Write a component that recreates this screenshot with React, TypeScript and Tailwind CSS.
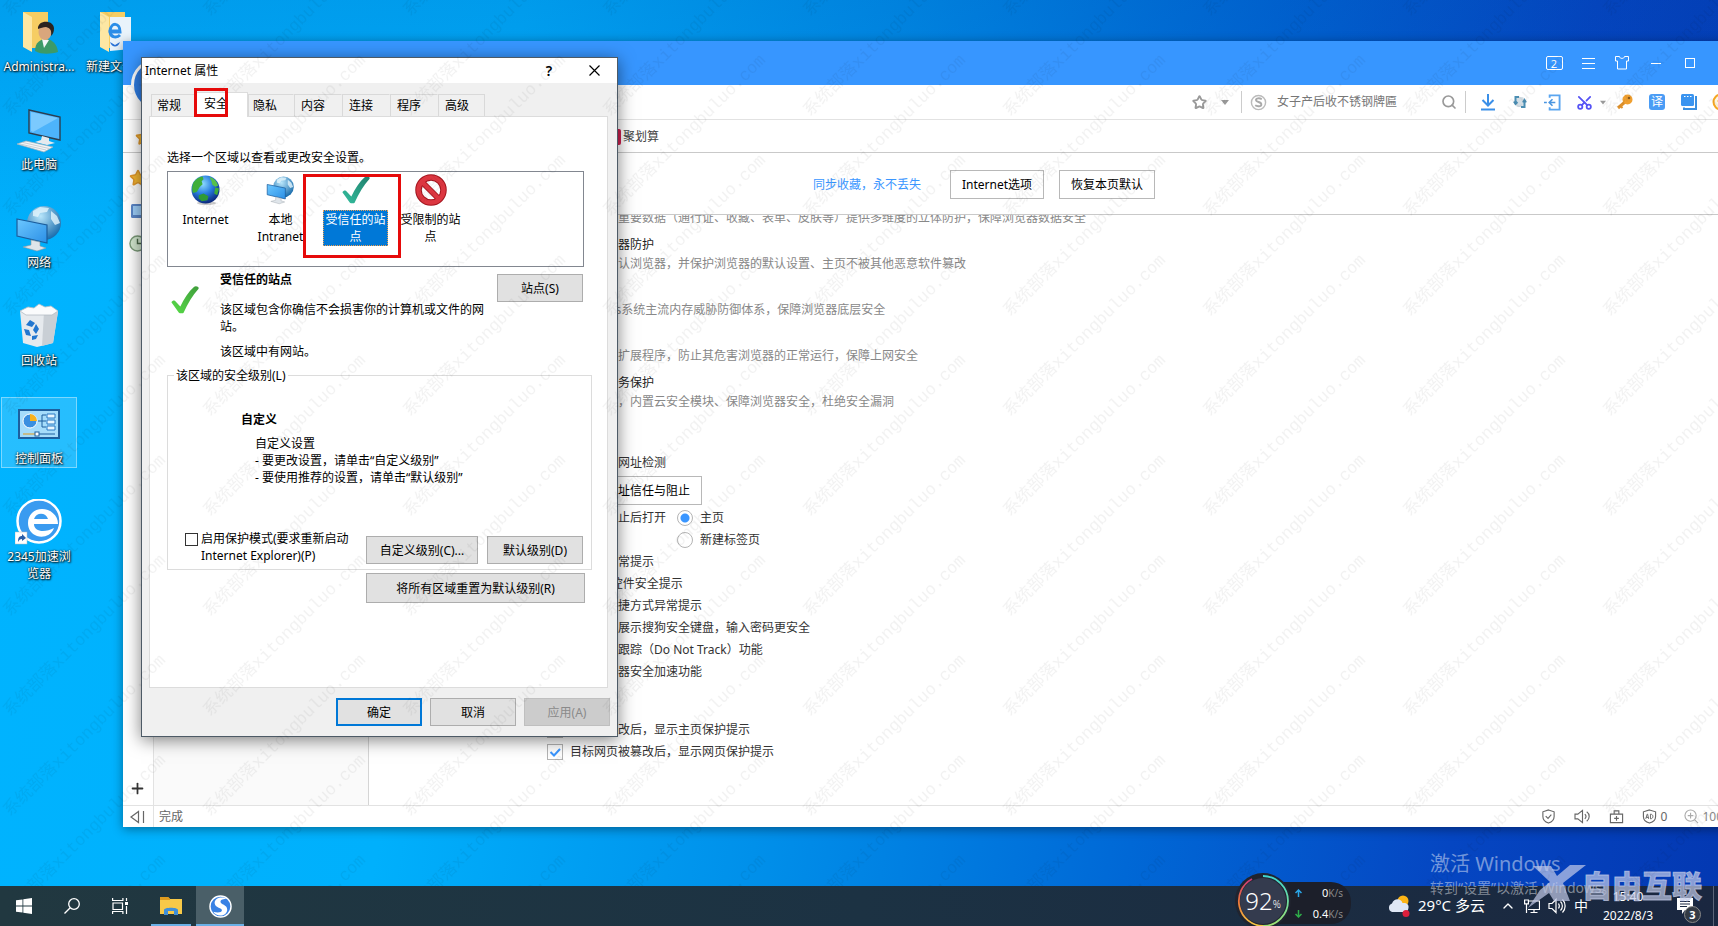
import { useState } from "react";
import type { ReactNode } from "react";
import { ChevronUp, Menu, Plus, Scissors, Search, Shirt, Star, X } from "lucide-react";
import clsx from "clsx";

const Globe = ({ className }: { className?: string }) => (
  <svg viewBox="0 0 32 32" className={className}>
    <defs>
      <radialGradient id="globe" cx="40%" cy="30%" r="70%">
        <stop offset="0" stopColor="#8fdcff" />
        <stop offset="0.5" stopColor="#2a7fe0" />
        <stop offset="1" stopColor="#0b2a80" />
      </radialGradient>
    </defs>
    <ellipse cx="17" cy="29" rx="10" ry="2" fill="#000" opacity="0.2" />
    <circle cx="16" cy="15" r="14.5" fill="url(#globe)" />
    <path d="M3 9c2-4 6-7 10-7.500l1 3-2 2 1 3-3 3-3 5-4 1c-1-3-1-6 0-9.500z" fill="#3fae3a" />
    <path d="M20 2c5 1 8 5 9 9l-3 1-3-2-1-4z" fill="#57c04a" />
    <path d="M9 21l5-2 5 3-1 4-6 1-3-3z" fill="#2f9a35" />
    <path d="M26 13l4 1-2 7-3-2z" fill="#3fae3a" />
  </svg>
);

const NetworkScreen = ({ className }: { className?: string }) => (
  <svg viewBox="0 0 48 48" className={className}>
    <defs>
      <linearGradient id="screen" x1="0" y1="0" x2="1" y2="1">
        <stop offset="0" stopColor="#6cc8ff" />
        <stop offset="1" stopColor="#2b8fe6" />
      </linearGradient>
      <radialGradient id="world" cx="40%" cy="30%" r="70%">
        <stop offset="0" stopColor="#b8e6fb" />
        <stop offset="1" stopColor="#1d6fae" />
      </radialGradient>
    </defs>
    <circle cx="29" cy="18" r="17" fill="url(#world)" />
    <path d="M18 6l7-4 9 1-2 4-7 1-2 4-5-1zM36 6l6 5 3 7-5 2-4-6z" fill="#e4f5fc" opacity="0.8" />
    <path d="M2 14l30 6v18L2 31z" fill="url(#screen)" stroke="#1b5d9c" strokeWidth="1.2" />
    <path d="M16 35l9 2v4l6 2-9 3-14-4 8-2z" fill="#dfe5ea" stroke="#90989f" strokeWidth="0.6" />
  </svg>
);

const Computer = () => (
  <svg viewBox="0 0 48 48" className="size-12">
    <path d="M14 3l31 7v23l-31-7z" fill="#4db4fb" stroke="#2c3e50" strokeWidth="1.4" />
    <path d="M16 5l27 6-25 14-2-1z" fill="#8fd3ff" opacity="0.7" />
    <path d="M27 29l7 2v3l6 2-8 2-12-3 6-2z" fill="#e5eaee" />
    <path d="M2 37l9-3 27 6-9 5z" fill="#f3f5f6" stroke="#a4b0b9" strokeWidth="0.7" />
    <path d="M5 37l26 6M8 35.500l26 6" stroke="#b4bec6" strokeWidth="0.7" />
  </svg>
);

const UserFolder = () => (
  <svg viewBox="0 0 48 48" className="size-12">
    <path d="M8 3h25v36H17z" fill="#f6cd63" />
    <path d="M8 3l9 5v35l-9-5z" fill="#fde7a3" />
    <path d="M20 42c0-9 6-12 11-12s11 4 12 13c-7 2-16 3-23-1z" fill="#3c9a68" />
    <path d="M27 30l2 9 5-8z" fill="#f3f7fa" />
    <ellipse cx="30" cy="23" rx="6.500" ry="8" fill="#d9a67c" />
    <path d="M23 20c-1-9 15-10 16-1 0 4-1 6-3 8 1-6-1-8-5-9-3 0-5 1-8 2z" fill="#2b2320" />
  </svg>
);

const FileFolder = () => (
  <svg viewBox="0 0 48 48" className="size-12">
    <path d="M8 3h25v36H17z" fill="#f6cd63" />
    <path d="M18 8h21v32l-21 2z" fill="#e9f3fb" />
    <path d="M8 3l9 5v35l-9-5z" fill="#fde7a3" />
    <path d="M27 22h-9c1-9 10-9 10 1H18c1 6 7 6 10 3" fill="none" stroke="#2a8de8" strokeWidth="3" />
    <path d="M18 33c2 6 8 6 10 0l-5 3z" fill="#2a72d8" />
  </svg>
);

const RecycleBin = () => (
  <svg viewBox="0 0 48 48" className="size-12">
    <path d="M5 8h38l-5 32-16 4-14-4z" fill="#e6eaee" />
    <path d="M29 9h14l-5 31-11 3z" fill="#c9cfd5" />
    <path d="M5 8l8-4 6 1 5-4 6 3 6-1 7 5-6 4H11z" fill="#fafbfc" stroke="#b4bcc4" strokeWidth="0.8" />
    <path d="M11 22l4-5 5 3-3 4zM21 21l3 5-3 5-3-4zM9 26l5 1 2 6-5-1zM17 33l6-1-2 4-4 1z" fill="#2276cf" />
  </svg>
);

const ControlPanel = () => (
  <svg viewBox="0 0 48 48" className="size-12">
    <rect x="4" y="9" width="40" height="28" fill="#a5dcfb" stroke="#1d5f9e" strokeWidth="2" />
    <circle cx="15" cy="20" r="7" fill="#3a8fe0" stroke="#fff" />
    <path d="M15 20v-7a7 7 0 0 1 7 7z" fill="#f8b21c" />
    <path d="M23 20h4v-6h4M27 20h4M27 20v6h4" fill="none" stroke="#1d5f9e" />
    <path d="M32 13h8v4h-8zM32 19h8v4h-8zM32 25h8v4h-8z" fill="#e9f6fe" stroke="#2878c4" />
    <path d="M8 33h12" stroke="#e39a1a" />
    <path d="M22 33h18" stroke="#1d5f9e" />
    <rect x="20" y="31" width="4" height="4" fill="#fff" stroke="#1d5f9e" />
  </svg>
);

const SpeedBrowser = () => (
  <svg viewBox="0 0 48 48" className="size-12">
    <circle cx="24" cy="22" r="21.500" fill="#3a9bf0" stroke="#fff" strokeWidth="2.500" />
    <path d="M43 25H19c0 8 11 9 20 4-3 8-11 10-17 8-6-2-9-7-9-13 0-8 6-14 14-14s16 6 16 15z" fill="#fff" />
    <path d="M19 20h14c-2-7-12-7-14 0z" fill="#3a9bf0" />
    <rect x="0" y="33" width="12" height="12" fill="#fff" stroke="#bbb" strokeWidth="0.500" />
    <path d="M3 43c0-4 1-6 4-6v-2l4 4-4 3v-2c-2 0-3 1-4 3z" fill="#2a5da8" />
  </svg>
);

const Tick = ({ className, id, from, to }: { className?: string; id: string; from: string; to: string }) => (
  <svg viewBox="0 0 32 32" className={className}>
    <defs>
      <linearGradient id={id} x1="1" y1="0" x2="0" y2="1">
        <stop offset="0" stopColor={from} />
        <stop offset="1" stopColor={to} />
      </linearGradient>
    </defs>
    <path d="M1.500 18.500c1-2 3.500-2.500 4.500-1l5 5.500C15 14 20 7 25.500 2c2-1.500 6 0 5 2C24 11 19 20 14.500 29.500c-.500 1-4 1-5 0z" fill={`url(#${id})`} />
  </svg>
);

const Forbidden = () => (
  <svg viewBox="0 0 32 32" className="size-8">
    <circle cx="16" cy="16" r="12.500" fill="#fff" stroke="#a3141d" strokeWidth="6.500" />
    <path d="M7.500 8.500l16 16" stroke="#a3141d" strokeWidth="6" />
    <circle cx="16" cy="16" r="12.500" fill="none" stroke="#dc3640" strokeWidth="4.500" />
    <path d="M7.500 8.500l16 16" stroke="#dc3640" strokeWidth="4" />
  </svg>
);

const Caret = () => (
  <svg viewBox="0 0 8 5" className="h-[5px] w-2">
    <path d="M0 0h8L4 5z" fill="#999" />
  </svg>
);

const desktopColumns: { label: string; icon: ReactNode; selected?: boolean }[][] = [
  [
    { label: "Administra...", icon: <UserFolder /> },
    { label: "此电脑", icon: <Computer /> },
    { label: "网络", icon: <NetworkScreen className="size-12" /> },
    { label: "回收站", icon: <RecycleBin /> },
    { label: "控制面板", icon: <ControlPanel />, selected: true },
    { label: "2345加速浏览器", icon: <SpeedBrowser /> },
  ],
  [{ label: "新建文件夹", icon: <FileFolder /> }],
];

function DesktopIcons() {
  return (
    <div className="flex gap-px pl-px">
      {desktopColumns.map((column, i) => (
        <div key={i} className="flex w-[76px] flex-col">
          {column.map((item) => (
            <div key={item.label} className="h-[98px] pt-[5px]">
              <div
                className={clsx(
                  "flex flex-col items-center border",
                  item.selected ? "border-white/40 bg-white/15" : "border-transparent"
                )}
              >
                <div className="pt-[3px]">{item.icon}</div>
                <span className="mt-px w-[74px] text-center text-xs leading-[17px] text-white [text-shadow:1px_1px_2px_#000,0_0_2px_#000]">
                  {item.label}
                </span>
              </div>
            </div>
          ))}
        </div>
      ))}
    </div>
  );
}

const protections = [
  { title: "数据安全防护", text: "可为您的重要数据（通行证、收藏、表单、皮肤等）提供多维度的立体防护，保障浏览器数据安全" },
  { title: "默认浏览器防护", text: "可锁定默认浏览器，并保护浏览器的默认设置、主页不被其他恶意软件篡改" },
  { title: "内存防护", text: "Windows系统主流内存威胁防御体系，保障浏览器底层安全" },
  { title: "扩展管理", text: "拦截恶意扩展程序，防止其危害浏览器的正常运行，保障上网安全" },
  { title: "浏览器服务保护", text: "优化内核，内置云安全模块、保障浏览器安全，杜绝安全漏洞" },
];

const options = [
  "浏览器异常提示",
  "ActiveX控件安全提示",
  "浏览器快捷方式异常提示",
  "网银页面展示搜狗安全键盘，输入密码更安全",
  "启用禁止跟踪（Do Not Track）功能",
  "开启浏览器安全加速功能",
];

const tamperOptions = ["主页被篡改后，显示主页保护提示", "目标网页被篡改后，显示网页保护提示"];

function CheckRow({ label }: { label: string }) {
  return (
    <label className="flex h-[22px] items-center gap-[7px] whitespace-nowrap text-[#333]">
      <span className="relative flex">
        <input type="checkbox" defaultChecked className="peer size-4 appearance-none border border-[#b4b4b4] bg-white" />
        <svg viewBox="0 0 16 16" className="pointer-events-none absolute inset-0 hidden size-4 peer-checked:block">
          <path d="M3.500 8l3.500 3.500L13 5" fill="none" stroke="#3a96ff" strokeWidth="2" />
        </svg>
      </span>
      {label}
    </label>
  );
}

function BrowserTitleBar() {
  const box = "flex w-[34px] items-center justify-center";
  return (
    <div className="relative flex h-11 shrink-0 justify-end bg-[#3796ff] pr-[9px] text-white">
      <div className="absolute left-2 top-[17px] size-[54px] rounded-full border-[3px] border-white bg-[#2f7ee6]" />
      <button className={box} aria-label="标签页">
        <span className="flex h-[14px] w-[17px] items-center justify-center rounded-xs border border-white text-[11px] leading-none">2</span>
      </button>
      <button className={box} aria-label="菜单">
        <svg viewBox="0 0 13 11" className="h-[11px] w-[13px]">
          <path d="M0 .500h13M0 5.500h13M0 10.500h13" stroke="#fff" />
        </svg>
      </button>
      <button className={box} aria-label="皮肤">
        <svg viewBox="0 0 14 14" className="size-[14px]">
          <path d="M.500.500h4c0 2.500 5 2.500 5 0h4v4.500h-2v8h-9V5h-2z" fill="none" stroke="#fff" />
        </svg>
      </button>
      <button className={box} aria-label="最小化"><span className="h-px w-[10px] bg-white" /></button>
      <button className={box} aria-label="最大化"><span className="size-[10px] border border-white" /></button>
      <button className={box} aria-label="关闭"><X className="size-4" /></button>
    </div>
  );
}

function BrowserToolbar() {
  const tool = "flex w-8 items-center justify-center";
  return (
    <div className="flex h-[35px] shrink-0 items-center justify-end border-b border-[#e2e2e2] bg-white pr-[13px]">
      <button className="flex w-9 justify-center" aria-label="收藏"><Star className="size-[15px] text-[#999]" strokeWidth={3} /></button>
      <button className="mr-2 flex w-4 justify-center" aria-label="更多收藏"><Caret /></button>
      <form className="flex h-[22px] items-center border-x border-[#ccc] pl-2">
        <svg viewBox="0 0 18 18" className="size-[17px]">
          <circle cx="9" cy="9" r="7.500" fill="none" stroke="#bbb" strokeWidth="1.500" />
          <path d="M12.500 5.500C10 4 6 4.300 6.300 6.500 6.500 9 12 8 12 11c0 2.500-4.500 2.500-6.500 1" fill="none" stroke="#aaa" strokeWidth="2" />
        </svg>
        <input
          aria-label="搜索"
          defaultValue="女子产后收不锈钢牌匾"
          className="ml-[10px] w-[164px] bg-transparent text-xs text-[#777] outline-none"
        />
        <button type="button" className="flex w-6 justify-start" aria-label="搜索"><Search className="size-4 text-[#999]" strokeWidth={2.5} /></button>
      </form>
      <button className={clsx(tool, "ml-[6px]")} aria-label="下载">
        <svg viewBox="0 0 16 18" className="h-[18px] w-4">
          <path d="M8 1v11M2.500 7L8 12.500 13.500 7M1 16.500h14" fill="none" stroke="#3a8fe8" strokeWidth="2" />
        </svg>
      </button>
      <button className={tool} aria-label="同步">
        <svg viewBox="0 0 14 14" className="size-[14px]">
          <rect x="3" y="2" width="8" height="10" rx="2" fill="#d5dfe6" />
          <path d="M6 2H2.500v6M1 6.500l1.500 2.500 2-2M8 12h3.500V6M10 7.500L11.500 5 13 7.500" fill="none" stroke="#4c8fb4" strokeWidth="2" />
        </svg>
      </button>
      <button className={tool} aria-label="登录">
        <svg viewBox="0 0 18 18" className="size-[17px]">
          <path d="M6 4V1.500h10.500v15H6V14" fill="none" stroke="#5aa5f0" strokeWidth="2" />
          <path d="M0 9h3M5 9h7M9 5.500L5.500 9 9 12.500" fill="none" stroke="#4a95e0" strokeWidth="1.700" />
        </svg>
      </button>
      <button className={tool} aria-label="截图"><Scissors className="size-[17px] -rotate-90 text-[#5552f5]" strokeWidth={2.5} /></button>
      <button className="mr-[3px] flex w-[6px] justify-center" aria-label="截图选项"><Caret /></button>
      <button className={tool} aria-label="密码">
        <svg viewBox="0 0 16 16" className="size-4">
          <path d="M8 8l-7 6" stroke="#e0922c" strokeWidth="3" />
          <path d="M3.500 12l2 2" stroke="#e0922c" strokeWidth="2" />
          <circle cx="10.500" cy="5.500" r="5" fill="#f0a030" />
          <circle cx="12" cy="4" r="1.300" fill="#8a5a1a" />
        </svg>
      </button>
      <button className={tool} aria-label="翻译">
        <span className="flex size-4 items-center justify-center rounded-[3px] bg-[#4a9cf5] text-xs leading-none text-white">译</span>
      </button>
      <button className={tool} aria-label="多窗口">
        <svg viewBox="0 0 16 16" className="size-4">
          <path d="M3 13.500v1.500h12V3h-1" fill="none" stroke="#3a8fe0" strokeWidth="2" />
          <rect width="13" height="12" rx="1.500" fill="#3a94f0" />
          <path d="M3 2.500h1.500M6 2.500h1.500M9 2.500h1.500" stroke="#fff" strokeWidth="1.200" />
        </svg>
      </button>
      <button className={tool} aria-label="更多工具">
        <svg viewBox="0 0 18 18" className="size-[18px]">
          <circle cx="9" cy="9" r="7.500" fill="#fff5df" stroke="#f5a623" strokeWidth="2" />
          <path d="M5.500 8h3M10 8h3" stroke="#f5a623" strokeWidth="1.500" />
        </svg>
      </button>
    </div>
  );
}

function BrowserStatusBar() {
  const line = { fill: "none", stroke: "#666", strokeWidth: 1.2 };
  return (
    <div className="flex h-[22px] shrink-0 items-center border-t border-[#e2e2e2] bg-white text-xs text-[#666]">
      <button className="flex h-full w-[31px] items-center border-r border-[#e2e2e2] pl-[6px]" aria-label="收起侧栏">
        <svg viewBox="0 0 16 14" className="h-[14px] w-4">
          <path d="M9.500 1.500v11L2 7zM14.500 1v12" {...line} />
        </svg>
      </button>
      <span className="ml-[5px] mr-auto">完成</span>
      <div className="flex items-center pr-[17px]">
        <button className="flex w-[34px] justify-center" aria-label="安全">
          <svg viewBox="0 0 16 16" className="size-[15px]">
            <path d="M8 1l6 2v5c0 4-3 6-6 7-3-1-6-3-6-7V3z" {...line} />
            <path d="M5 7.500l2.500 2.500L11 6" {...line} />
          </svg>
        </button>
        <button className="flex w-[34px] justify-center" aria-label="声音">
          <svg viewBox="0 0 18 16" className="h-[15px] w-[17px]">
            <path d="M1 5.500h3l5-4v13l-5-4H1zM11.500 5.500c1.500 1.500 1.500 3.500 0 5M13.500 3c3.500 2.500 3.500 7.500 0 10" {...line} />
          </svg>
        </button>
        <button className="flex w-[34px] justify-center" aria-label="修复">
          <svg viewBox="0 0 16 16" className="size-[15px]">
            <path d="M1.500 5.500h13v9h-13zM5.500 5.500V2h5v3.500M8 7.500v5M5.500 10h5" {...line} />
          </svg>
        </button>
        <button className="ml-2 flex items-center gap-1" aria-label="广告拦截">
          <svg viewBox="0 0 16 16" className="size-[15px]">
            <path d="M8 1l6.500 2v5c0 4-3 6-6.500 7-3.500-1-6.500-3-6.500-7V3z" {...line} />
            <path d="M4 10.500L5.500 5.500h.500L7 10.500M4.500 9H7M9 5.500v5c3.500 0 3.500-5 0-5z" {...line} strokeWidth={1} />
          </svg>
          <span>0</span>
        </button>
        <button className="ml-[17px] flex items-center gap-[3px] text-[#888]" aria-label="缩放">
          <svg viewBox="0 0 16 16" className="size-[15px]">
            <path d="M1 7a6 6 0 1 0 12 0 6 6 0 1 0-12 0M11.500 11.500L15 15M7 4v6M4 7h6" {...line} stroke="#aaa" />
          </svg>
          <span>100%</span>
        </button>
      </div>
    </div>
  );
}

function BrowserWindow() {
  const [target, setTarget] = useState("home");
  const outlined = "h-[29px] border border-[#b8b8b8] bg-white px-[11px] text-black";
  const radio =
    "size-4 appearance-none rounded-full border border-[#b4b4b4] bg-white checked:bg-[radial-gradient(circle,#3a96ff_4px,transparent_5px)]";

  return (
    <section className="absolute -right-8 bottom-[59px] left-[123px] top-[41px] flex flex-col bg-white text-xs shadow-[0_2px_10px_rgba(0,0,0,0.4)]">
      <BrowserTitleBar />
      <BrowserToolbar />
      <div className="flex h-[33px] shrink-0 items-center border-b border-[#c9c9c9] pt-[2px] text-[#444]">
        <div className="w-[482px] pl-3">
          <Star className="size-[17px] fill-[#f5b731] text-[#e0982a]" />
        </div>
        <a href="#deals" className="flex items-center gap-[2px]">
          <span className="flex size-4 flex-col justify-center gap-[2px] rounded-xs bg-[#d02050] px-[3px]">
            <span className="h-px bg-white" />
            <span className="h-px bg-white" />
            <span className="h-px bg-white" />
          </span>
          聚划算
        </a>
      </div>
      <div className="flex min-h-0 flex-1">
        <div className="flex w-[31px] shrink-0 flex-col items-start gap-4 border-r border-[#e2e2e2] pl-[6px] pt-4">
          <Star className="size-[18px] fill-[#f5b731] text-[#e0982a]" />
          <svg viewBox="0 0 18 16" className="ml-px h-4 w-[18px]">
            <rect x="1" y="1" width="16" height="14" rx="1.500" fill="#5b87c8" />
            <rect x="3" y="3" width="12" height="9" fill="#9fd0fb" />
          </svg>
          <svg viewBox="0 0 18 18" className="size-[17px]">
            <circle cx="9" cy="9" r="8" fill="#d3e8cf" stroke="#7b9a78" strokeWidth="1.500" />
            <path d="M9 4v5h4" fill="none" stroke="#4c6a4a" strokeWidth="1.500" />
          </svg>
          <button className="mb-2 mt-auto" aria-label="添加"><Plus className="size-[17px] text-[#333]" strokeWidth={2.5} /></button>
        </div>
        <aside className="w-[215px] shrink-0 border-r border-[#d5d5d5] bg-[#fafafa]" />
        <div className="flex min-w-0 flex-1 flex-col">
          <header className="flex h-[62px] shrink-0 items-center border-b border-[#c9c9c9] pl-[444px] pt-[2px]">
            <a href="#sync" className="mr-[29px] text-[#3a96ff]">同步收藏，永不丢失</a>
            <button className={clsx(outlined, "mr-[15px]")}>Internet选项</button>
            <button className={outlined}>恢复本页默认</button>
          </header>
          <div className="min-h-0 flex-1 overflow-hidden pl-[178px]">
            <ul className="-mt-[26px] mb-[41px] pl-[23px]">
              {protections.map((item) => (
                <li key={item.title} className="mb-2 whitespace-nowrap leading-[19px]">
                  <h3 className="text-[#222]">{item.title}</h3>
                  <p className="text-[#888]">{item.text}</p>
                </li>
              ))}
            </ul>
            <CheckRow label="开启恶意网址检测" />
            <div className="my-[2px] pl-[23px]">
              <button className={outlined}>管理网址信任与阻止</button>
            </div>
            <div className="flex pl-[23px] leading-[22px] text-[#333]">
              <span className="w-[107px]">网页被阻止后打开</span>
              <div>
                <label className="flex h-[22px] items-center gap-[7px]">
                  <input type="radio" name="target" className={radio} checked={target === "home"} onChange={() => setTarget("home")} />
                  主页
                </label>
                <label className="flex h-[22px] items-center gap-[7px]">
                  <input type="radio" name="target" className={radio} checked={target === "tab"} onChange={() => setTarget("tab")} />
                  新建标签页
                </label>
              </div>
            </div>
            {options.map((label) => (
              <CheckRow key={label} label={label} />
            ))}
            <div className="mt-9">
              {tamperOptions.map((label) => (
                <CheckRow key={label} label={label} />
              ))}
            </div>
          </div>
        </div>
      </div>
      <BrowserStatusBar />
    </section>
  );
}

const tabs = [
  { label: "常规", size: "w-[45px] pl-[5px]" },
  { label: "安全", size: "w-[52px] pl-[7px]" },
  { label: "隐私", size: "w-[46px] pl-[4px]" },
  { label: "内容", size: "w-12 pl-[6px]" },
  { label: "连接", size: "w-12 pl-[6px]" },
  { label: "程序", size: "w-12 pl-[6px]" },
  { label: "高级", size: "w-[47px] pl-[6px]" },
];

const zones = [
  { label: "Internet", icon: <Globe className="size-[31px]" /> },
  { label: "本地 Intranet", icon: <NetworkScreen className="size-[29px]" /> },
  { label: "受信任的站点", icon: <Tick className="size-[30px]" id="teal-tick" from="#1f7f6c" to="#35c0a0" /> },
  { label: "受限制的站点", icon: <Forbidden /> },
];

const winButton = "border border-[#adadad] bg-[#e1e1e1] text-black";

function InternetOptions() {
  const [tab, setTab] = useState("安全");
  const [zone, setZone] = useState("受信任的站点");

  return (
    <section className="absolute left-[141px] top-[57px] w-[477px] border border-[#4d5a66] bg-[#f0f0f0] text-xs leading-[17px] text-black shadow-[0_3px_16px_rgba(0,0,0,0.5)]">
      <div className="flex h-[25px] items-center bg-white pl-[3px]">
        <h1 className="mr-auto">Internet 属性</h1>
        <button className="w-11 text-center text-sm font-semibold" aria-label="帮助">?</button>
        <button className="flex w-[46px] justify-center" aria-label="关闭">
          <svg viewBox="0 0 11 11" className="size-[11px]">
            <path d="M0.500 0.500l10 10M10.500 0.500l-10 10" stroke="#000" strokeWidth="1.200" />
          </svg>
        </button>
      </div>

      <div className="pl-[7px] pr-[9px] pt-[9px]">
        <div role="tablist" className="flex h-6 items-end pl-[2px]">
          {tabs.map((t) => (
            <button
              key={t.label}
              role="tab"
              aria-selected={t.label === tab}
              onClick={() => setTab(t.label)}
              className={clsx(
                "relative text-left",
                t.size,
                t.label === tab
                  ? "z-10 -mb-px h-[25px] border border-b-0 border-[#dcdcdc] border-l-transparent bg-white pb-1"
                  : "h-[22px] border border-b-0 border-l-[#d9d9d9] border-r-transparent border-t-[#d9d9d9] last:border-r-[#d9d9d9]"
              )}
            >
              {t.label}
              {t.label === "安全" && (
                <span className="absolute -left-[3px] -top-[5px] h-[29px] w-[34px] border-3 border-[#e60a0a]" />
              )}
            </button>
          ))}
        </div>

        <div className="border border-[#dcdcdc] bg-white pb-[84px] pl-[17px] pr-[15px] pt-8">
          <p>选择一个区域以查看或更改安全设置。</p>
          <div className="mr-2 mt-[5px] flex h-24 border border-[#828790]">
            {zones.map((z) => (
              <button key={z.label} onClick={() => setZone(z.label)} className="relative flex w-[75px] flex-col items-center pt-[2px]">
                <span className="flex h-8 items-center">{z.icon}</span>
                <span
                  className={clsx(
                    "mt-1 w-[65px] border px-px text-center",
                    z.label === zone ? "border-dotted border-[#f0a050] bg-[#0078d7] text-white" : "border-transparent"
                  )}
                >
                  {z.label}
                </span>
                {z.label === "受信任的站点" && (
                  <span className="absolute -left-[15px] top-[2px] h-[84px] w-[98px] border-3 border-[#e60a0a]" />
                )}
              </button>
            ))}
          </div>

          <div className="mt-1 flex items-start">
            <Tick className="ml-[3px] mt-[14px] size-[30px]" id="green-tick" from="#3f9d3c" to="#58dd48" />
            <div className="ml-5 w-[268px]">
              <h2 className="font-bold">受信任的站点</h2>
              <p className="mt-[13px]">该区域包含你确信不会损害你的计算机或文件的网站。</p>
              <p className="mt-2">该区域中有网站。</p>
            </div>
            <button className={clsx(winButton, "ml-auto mr-[9px] mt-[3px] h-7 w-[86px]")}>站点(S)</button>
          </div>

          <fieldset className="mt-[7px] border border-[#dcdcdc] pb-[5px]">
            <legend className="ml-[6px] px-[2px]">该区域的安全级别(L)</legend>
            <h3 className="ml-[73px] mt-[27px] font-bold">自定义</h3>
            <div className="ml-[87px] mt-[7px]">
              <p>自定义设置</p>
              <p>- 要更改设置，请单击“自定义级别”</p>
              <p>- 要使用推荐的设置，请单击“默认级别”</p>
            </div>
            <div className="mr-2 mt-[44px] flex items-end">
              <label className="ml-[17px] mr-auto flex w-[168px] items-start gap-[3px]">
                <input type="checkbox" className="mt-[3px] size-[13px] shrink-0 appearance-none border border-[#333] bg-white checked:bg-[#0078d7]" />
                <span>启用保护模式(要求重新启动Internet Explorer)(P)</span>
              </label>
              <button className={clsx(winButton, "mr-[9px] h-7 w-28")}>自定义级别(C)...</button>
              <button className={clsx(winButton, "h-7 w-24")}>默认级别(D)</button>
            </div>
          </fieldset>
          <div className="mr-[7px] mt-[3px] flex justify-end">
            <button className={clsx(winButton, "h-[30px] w-[219px]")}>将所有区域重置为默认级别(R)</button>
          </div>
        </div>
      </div>

      <div className="flex justify-end gap-2 py-[10px] pr-[7px]">
        <button className="h-7 w-[86px] border-2 border-[#0078d7] bg-[#e1e1e1]">确定</button>
        <button className={clsx(winButton, "h-7 w-[86px]")}>取消</button>
        <button disabled className="h-7 w-[86px] border border-[#bfbfbf] bg-[#ccc] text-[#8a8a8a]">应用(A)</button>
      </div>
    </section>
  );
}

function SpeedWidget() {
  const unit = "text-[10px] text-[#888]";
  return (
    <div className="absolute -top-[14px] left-[1235px] flex h-[54px] items-end overflow-hidden text-white">
      <div className="relative z-10 size-14 shrink-0 translate-y-[3px]">
        <svg viewBox="0 0 56 56" className="absolute inset-0 size-14">
          <defs>
            <linearGradient id="ring" x1="0" y1="0" x2="0" y2="1">
              <stop offset="0" stopColor="#c83a78" />
              <stop offset="0.500" stopColor="#ee7a3a" />
              <stop offset="1" stopColor="#f2c744" />
            </linearGradient>
            <linearGradient id="ring-right" x1="0" y1="0" x2="0" y2="1">
              <stop offset="0" stopColor="#3fd6d0" />
              <stop offset="1" stopColor="#9fe070" />
            </linearGradient>
          </defs>
          <circle cx="28" cy="28" r="28" fill="#20242f" />
          <circle cx="28" cy="28" r="23" fill="#343b4e" />
          <path d="M28 3a25 25 0 0 1 0 50" fill="none" stroke="url(#ring-right)" strokeWidth="1.800" />
          <path d="M28 53A25 25 0 0 1 17 6" fill="none" stroke="url(#ring)" strokeWidth="1.800" />
        </svg>
        <span className="absolute inset-0 flex items-center justify-center text-2xl font-light">
          92<small className="mt-2 text-[10px]">%</small>
        </span>
      </div>
      <div className="-ml-6 mb-[2px] flex h-[42px] w-[84px] flex-col justify-around rounded-r-[20px] bg-[#1c1f2a] pl-7 pr-2 text-[11px] leading-4">
        <div className="flex items-center justify-between">
          <svg viewBox="0 0 7 8" className="h-2 w-[7px]"><path d="M3.500 8V1M.500 4l3-3 3 3" fill="none" stroke="#2aa6e8" strokeWidth="1.500" /></svg>
          <span>0<span className={unit}>K/s</span></span>
        </div>
        <div className="flex items-center justify-between">
          <svg viewBox="0 0 7 8" className="h-2 w-[7px]"><path d="M3.500 0v7M.500 4l3 3 3-3" fill="none" stroke="#2fae4a" strokeWidth="1.500" /></svg>
          <span>0.4<span className={unit}>K/s</span></span>
        </div>
      </div>
    </div>
  );
}

function Taskbar() {
  const slot = "flex h-full w-12 items-center justify-center";
  return (
    <footer className="relative flex h-10 shrink-0 items-center bg-linear-to-r from-[#213840] via-[#1c3243] to-[#1a2740] text-sm text-white">
      <button className={slot} aria-label="开始">
        <svg viewBox="0 0 16 16" className="size-4" fill="#fff">
          <path d="M0 2.300l6.500-.9v6.200H0zM7.300 1.300L16 0v7.600H7.300zM0 8.400h6.500v6.200L0 13.700zM7.300 8.400H16V16l-8.700-1.300z" />
        </svg>
      </button>
      <button className={slot} aria-label="搜索">
        <svg viewBox="0 0 16 16" className="size-4" fill="none" stroke="#fff" strokeWidth="1.300">
          <circle cx="10" cy="6" r="5.300" />
          <path d="M6.200 9.800L0.500 15.500" />
        </svg>
      </button>
      <button className={slot} aria-label="任务视图">
        <svg viewBox="0 0 16 16" className="size-4" fill="none" stroke="#fff" strokeWidth="1.200">
          <path d="M1 5h9.500v6.500H1zM0.600 0v2.500h10.300V0M0.600 16v-2.500h10.300V16M14.500 0v3M14.500 8v8" />
          <path d="M13 4h3v3h-3z" fill="#fff" stroke="none" />
        </svg>
      </button>
      <button className="mx-[7px] flex h-full w-10 items-center justify-center border-b-2 border-t-2 border-[#6ab0e6] border-t-transparent" aria-label="文件资源管理器">
        <svg viewBox="0 0 22 18" className="h-[18px] w-[22px]">
          <path d="M0 0h8l2 2h12v15H0z" fill="#f7c948" />
          <path d="M0 0h8l2 2v1H0z" fill="#dd9b1f" />
          <path d="M4 18v-5c0-3 14-3 14 0v5h-4v-4H8v4z" fill="#3f8fd8" />
        </svg>
      </button>
      <button className="-ml-[2px] flex h-full w-12 items-center justify-center border-b-2 border-t-2 border-[#6ab0e6] border-t-transparent bg-[#4a5f68]" aria-label="浏览器">
        <svg viewBox="0 0 24 24" className="size-[23px]">
          <circle cx="12" cy="12" r="11" fill="#3a82e4" stroke="#fff" strokeWidth="1.500" />
          <path d="M18.500 4C12 .500 5 4 6 9c1 4.500 7.500 4 7.500 7 0 2.500-5 3-9 1.500C8.500 24 19 22 19 15c0-5-7-5-7-8 0-2 3.500-3 6.500-3z" fill="#fff" />
        </svg>
      </button>

      <SpeedWidget />

      <div className="ml-auto flex h-full items-center pr-1">
        <svg viewBox="0 0 24 22" className="h-[22px] w-6">
          <circle cx="16" cy="6" r="5.500" fill="#fbb416" />
          <path d="M5 17a4.500 4.500 0 0 1 0-8.500C7 3 14 3 15.500 8c5-.500 6.500 2 6 5s-2 4-5 4z" fill="#dfe7f5" />
          <circle cx="19" cy="18.500" r="3.500" fill="#dc1f3c" />
        </svg>
        <span className="ml-[7px] w-[78px] whitespace-nowrap text-[15px]">29°C 多云</span>
        <button className="flex w-6 justify-center" aria-label="显示隐藏的图标"><ChevronUp className="size-4" /></button>
        <svg viewBox="0 0 16 16" className="ml-1 size-4" fill="none" stroke="#fff" strokeWidth="1.200">
          <path d="M5 3h10.500v8.500H4M10 11.500v3M6.500 14.500h7M0.600 2h3.800v3.800H0.600zM2.500 6v9" />
        </svg>
        <svg viewBox="0 0 18 16" className="ml-2 h-4 w-[18px]" fill="none" stroke="#fff" strokeWidth="1.200">
          <path d="M1 5.500h3l4-4v13l-4-4H1zM10.500 5.500c1 1.500 1 3.500 0 5M12.500 3.500c2.500 2.500 2.500 6.500 0 9M14.500 1.500c3.500 3.500 3.500 9.500 0 13" />
        </svg>
        <span className="ml-2">中</span>
        <div className="ml-[13px] w-[54px] text-center text-xs leading-[19px]">
          <p>15:40</p>
          <p>2022/8/3</p>
        </div>
        <button className="relative ml-[18px] flex w-6 justify-center" aria-label="通知">
          <svg viewBox="0 0 16 16" className="size-4">
            <path d="M0 0h16v12H8l-3 4v-4H0z" fill="#fff" />
            <path d="M3 3.500h10M3 6h10M3 8.500h7" stroke="#1a2740" />
          </svg>
          <span className="absolute left-[11px] top-2 flex size-[17px] items-center justify-center rounded-full border border-[#888] bg-[#333a44] text-[11px] font-bold leading-none">3</span>
        </button>
        <span className="ml-4 h-full w-px bg-[#5a6478]" />
      </div>
    </footer>
  );
}

function ActivationNotice() {
  return (
    <div className="pointer-events-none absolute bottom-7 left-[1430px] whitespace-nowrap text-white/45">
      <p className="text-xl leading-7">激活 Windows</p>
      <p className="text-sm leading-5">转到“设置”以激活 Windows。</p>
    </div>
  );
}

function SiteLogo() {
  return (
    <div className="pointer-events-none absolute bottom-[18px] right-[16px] flex items-center text-[#c3cbe8]/70">
      <svg viewBox="0 0 60 44" className="-mr-1 h-11 w-[60px]" fill="currentColor">
        <path d="M7 2h18l6 10L44 1h16L37 19l7 18H28l-5-8L2 44l12-18 10-8z" />
      </svg>
      <span className="text-[30px] font-black leading-8 [-webkit-text-stroke:1px_currentColor]">自由互联</span>
    </div>
  );
}

function Watermark() {
  return (
    <svg className="pointer-events-none absolute inset-x-0 bottom-10 top-0 h-[calc(100%-40px)] w-full" aria-hidden="true">
      <defs>
        <pattern id="watermark" width="200" height="100" patternUnits="userSpaceOnUse">
          {[-200, 0].map((x) =>
            [17, 117, 217].map((y) => (
              <text
                key={`${x}:${y}`}
                transform={`translate(${x + 10} ${y}) rotate(-45)`}
                className="fill-black/5 font-['Liberation_Mono','Noto_Sans_CJK_SC',monospace] text-[17px]"
              >
                系统部落xitongbuluo.com
              </text>
            ))
          )}
        </pattern>
      </defs>
      <rect width="100%" height="100%" fill="url(#watermark)" />
    </svg>
  );
}

export default function App() {
  return (
    <div className="relative flex h-screen w-full flex-col overflow-hidden bg-[linear-gradient(to_bottom,rgba(0,60,160,0.18),transparent_30%),linear-gradient(100deg,#00b4ff_0%,#00b0fc_28%,#0090ea_48%,#0068d6_68%,#0546c2_85%,#0338b2_100%)] font-['Noto_Sans','Noto_Sans_CJK_SC',sans-serif]">
      <main className="min-h-0 flex-1">
        <DesktopIcons />
      </main>
      <Taskbar />
      <div className="pointer-events-none absolute inset-x-0 bottom-10 top-0 *:pointer-events-auto">
        <BrowserWindow />
        <InternetOptions />
      </div>
      <ActivationNotice />
      <SiteLogo />
      <Watermark />
    </div>
  );
}
